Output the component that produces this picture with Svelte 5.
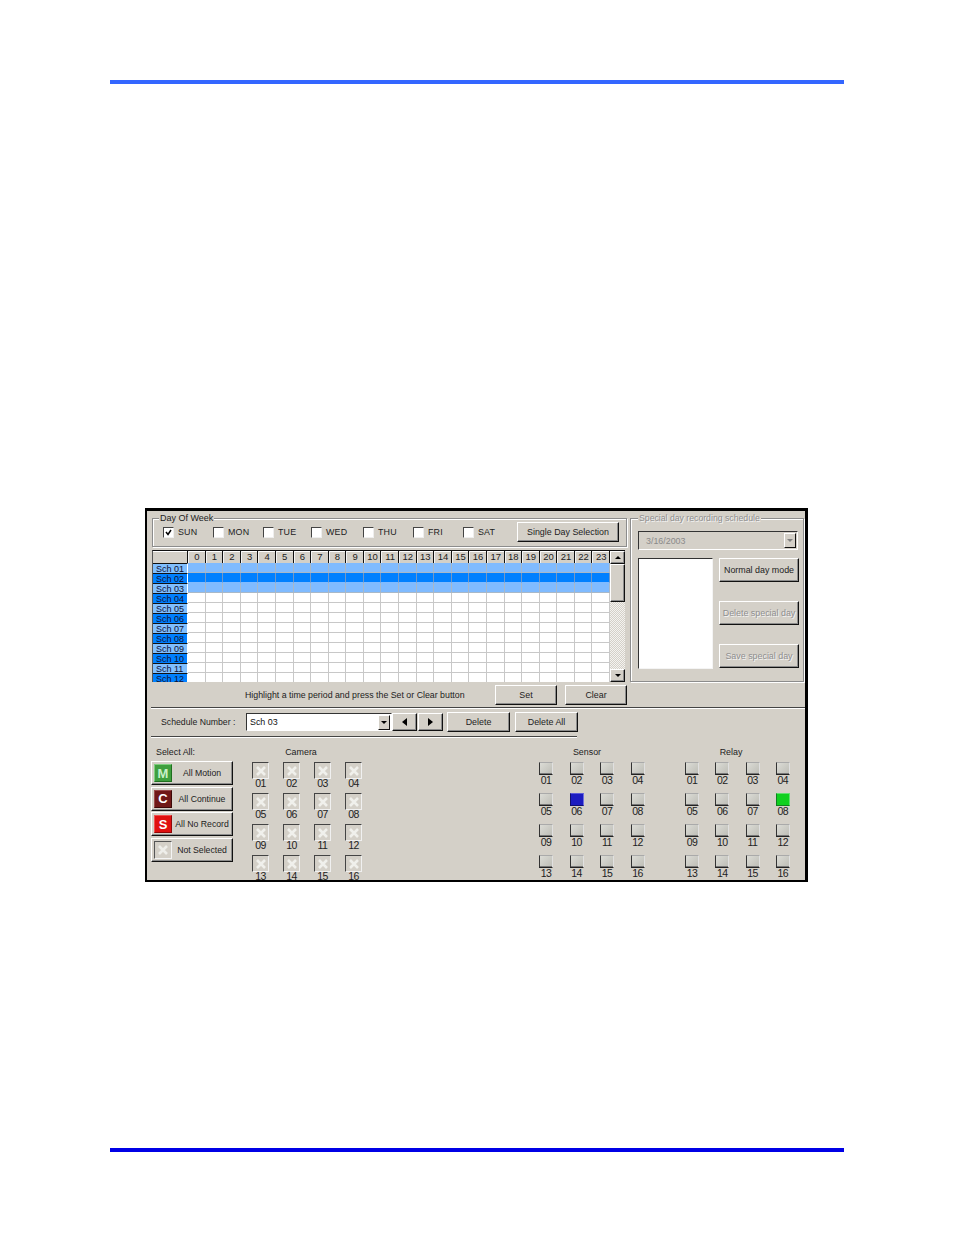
<script lang="ts">
	const days = ['SUN', 'MON', 'TUE', 'WED', 'THU', 'FRI', 'SAT'];
	const hours = Array.from({ length: 24 }, (_, i) => i);
	const pad = (n: number) => String(n).padStart(2, '0');
	const schedules = Array.from({ length: 12 }, (_, i) => 'Sch ' + pad(i + 1));
	const slots = Array.from({ length: 16 }, (_, i) => pad(i + 1));

	const modes = [
		{ key: 'M', label: 'All Motion', cls: 'motion' },
		{ key: 'C', label: 'All Continue', cls: 'continue' },
		{ key: 'S', label: 'All No Record', cls: 'norecord' },
		{ key: '', label: 'Not Selected', cls: 'none' }
	];

	// rows 1-3 are the ones selected in the grid
	function rowClass(i: number) {
		if (i === 1) return 'on-dark';
		if (i === 0 || i === 2) return 'on-light';
		return '';
	}
</script>

<div class="page">
	<div class="rule top-rule"></div>

	<div class="window">
		<div class="upper">
			<div class="left-col">
				<div class="group days">
					<span class="legend">Day Of Week</span>
					<div class="day-row">
						{#each days as day, i}
							<div class="day day-{i}">
								<span class="check">
									{#if i === 0}
										<svg viewBox="0 0 9 9" width="9" height="9"><path d="M2 4 L4 6.5 L7 2" fill="none" stroke="#000" stroke-width="1.5" /></svg>
									{/if}
								</span>
								<span>{day}</span>
							</div>
						{/each}
						<div class="btn single">Single Day Selection</div>
					</div>
				</div>

				<div class="grid-wrap">
					<div class="grid">
						<div class="head corner"></div>
						{#each hours as h}
							<div class="head">{h}</div>
						{/each}
						{#each schedules as name, i}
							<div class="row-label" class:alt={i % 2 === 1}>{name}</div>
							{#each hours as h}
								<div class="cell {rowClass(i)}"></div>
							{/each}
						{/each}
					</div>
					<div class="scrollbar">
						<div class="sb-btn"><span class="tri up"></span></div>
						<div class="sb-thumb"></div>
						<div class="sb-track"></div>
						<div class="sb-btn"><span class="tri down"></span></div>
					</div>
				</div>

				<div class="hint-row">
					<span class="hint">Highlight a time period and press the Set or Clear button</span>
					<div class="btn set">Set</div>
					<div class="btn clear">Clear</div>
				</div>
			</div>

			<div class="group special">
				<span class="legend disabled">Special day recording schedule</span>
				<div class="date-combo">
					<span>3/16/2003</span>
					<div class="combo-btn"><span class="tri down grey"></span></div>
				</div>
				<div class="special-body">
					<div class="listbox"></div>
					<div class="special-btns">
						<div class="btn">Normal day mode</div>
						<div class="btn disabled-btn">Delete special day</div>
						<div class="btn disabled-btn">Save special day</div>
					</div>
				</div>
			</div>
		</div>

		<div class="divider full"></div>

		<div class="schedule-row">
			<span class="schedule-label">Schedule Number :</span>
			<div class="sch-combo">
				<span>Sch 03</span>
				<div class="combo-btn"><span class="tri down"></span></div>
			</div>
			<div class="btn nav"><span class="tri left"></span></div>
			<div class="btn nav"><span class="tri right"></span></div>
			<div class="btn del">Delete</div>
			<div class="btn del-all">Delete All</div>
		</div>

		<div class="divider short"></div>

		<div class="lower">
			<div class="select-all">
				<div class="section-title">Select All:</div>
				{#each modes as m}
					<div class="btn mode">
						<span class="badge {m.cls}">
							{#if m.key}
								{m.key}
							{:else}
								<svg viewBox="0 0 14 14" width="14" height="14"><path d="M3 3 L11 11 M11 3 L3 11" stroke="#eeeeea" stroke-width="2.6" /></svg>
							{/if}
						</span>
						<span class="mode-text">{m.label}</span>
					</div>
				{/each}
			</div>

			<div class="bank camera">
				<div class="section-title">Camera</div>
				<div class="tiles">
					{#each slots as s}
						<div class="slot">
							<span class="cam-tile">
								<svg viewBox="0 0 14 14" width="14" height="14"><path d="M3 3 L11 11 M11 3 L3 11" stroke="#f0f0ec" stroke-width="2.6" /></svg>
							</span>
							<span class="num">{s}</span>
						</div>
					{/each}
				</div>
			</div>

			<div class="bank sensor">
				<div class="section-title">Sensor</div>
				<div class="tiles">
					{#each slots as s}
						<div class="slot">
							<span class="led" class:blue={s === '06'}></span>
							<span class="num">{s}</span>
						</div>
					{/each}
				</div>
			</div>

			<div class="bank relay">
				<div class="section-title">Relay</div>
				<div class="tiles">
					{#each slots as s}
						<div class="slot">
							<span class="led" class:green={s === '08'}></span>
							<span class="num">{s}</span>
						</div>
					{/each}
				</div>
			</div>
		</div>
	</div>

	<div class="rule bottom-rule"></div>
</div>

<style>
	:global(body) {
		margin: 0;
		background: #fff;
	}

	.page {
		width: 954px;
		height: 1235px;
		padding: 80px 110px 0;
		box-sizing: border-box;
		font-family: 'Liberation Sans', Arial, sans-serif;
		font-size: 8.9px;
		color: #111;
	}

	.rule {
		width: 734px;
		height: 4px;
	}

	.top-rule {
		background: #3366ff;
	}

	.bottom-rule {
		background: #0000e6;
		margin-top: 266px;
	}

	.window {
		width: 663px;
		height: 374px;
		margin: 424px 0 0 35px;
		box-sizing: border-box;
		border: solid #000;
		border-width: 3px 3px 2px 2px;
		background: #d4d0c8;
		overflow: hidden;
	}

	.upper {
		display: flex;
		gap: 3px;
		padding: 7px 0 0 5px;
		height: 196px;
		box-sizing: border-box;
	}

	.left-col {
		width: 475px;
	}

	.group {
		box-sizing: border-box;
		border: 1px solid #8c8c8c;
		box-shadow: 1px 1px 0 #fff, inset 1px 1px 0 #fff;
	}

	.legend {
		display: block;
		width: fit-content;
		background: #d4d0c8;
		line-height: 10px;
		padding: 0 1px;
		margin: -6px 0 0 6px;
		font-size: 9px;
		color: #222;
	}

	.legend.disabled {
		margin-left: 0;
		font-size: 8.7px;
		color: #8f8f8f;
		text-shadow: 1px 1px 0 #f4f4f4;
	}

	.days {
		height: 29px;
	}

	.day-row {
		display: flex;
		align-items: center;
		height: 22px;
		margin-top: -2px;
	}

	.day {
		display: flex;
		align-items: center;
		gap: 4px;
		width: 50px;
		letter-spacing: 0.2px;
		color: #222;
	}

	.day-0 {
		margin-left: 10px;
	}

	.day-2 {
		width: 48px;
	}

	.day-3 {
		width: 52px;
	}

	.check {
		width: 9px;
		height: 9px;
		background: #fff;
		border: 1px solid;
		border-color: #444 #eee #eee #444;
		display: flex;
		flex: none;
	}

	.btn {
		box-sizing: border-box;
		display: flex;
		align-items: center;
		justify-content: center;
		background: #d4d0c8;
		border: 1px solid;
		border-color: #fff #111 #111 #fff;
		box-shadow: inset -1px -1px 0 #8c8c8c;
		color: #222;
		white-space: nowrap;
	}

	.single {
		width: 102px;
		height: 20px;
		margin-left: 4px;
	}

	.grid-wrap {
		display: flex;
		margin-top: 3px;
		height: 132px;
		border-left: 1px solid #555;
		border-top: 1px solid #111;
		overflow: hidden;
		width: 473px;
		box-sizing: border-box;
		box-shadow: inset 0 -1px 0 #eee;
	}

	.grid {
		width: 457px;
		height: 131px;
		overflow: hidden;
		flex: none;
		display: grid;
		grid-template-columns: 35px repeat(24, 1fr);
		grid-auto-rows: 10px;
		grid-template-rows: 12px;
		background: #fff;
	}

	.head {
		box-sizing: border-box;
		background: #d4d0c8;
		border-right: 1px solid #111;
		border-left: 1px solid #f4f4f4;
		text-align: center;
		line-height: 12px;
		font-size: 9.5px;
		color: #222;
		box-shadow: inset 0 1px 0 #fff;
	}

	.corner {
		border-left: 0;
	}

	.row-label {
		box-sizing: border-box;
		background: #80bfff;
		border-top: 1px solid #111;
		border-right: 1px solid #fff;
		line-height: 10px;
		padding-left: 3px;
		font-size: 9px;
		color: #113;
		overflow: hidden;
	}

	.row-label.alt {
		background: #0080ff;
	}

	.cell {
		box-sizing: border-box;
		background: #fff;
		border-right: 1px solid #c8c8c8;
		border-bottom: 1px solid #c8c8c8;
	}

	.cell.on-light {
		background: #80bbff;
		border-color: #a8b8c8;
	}

	.cell.on-dark {
		background: #0080ff;
		border-right-color: #7098c8;
		border-bottom-color: #80bbff;
	}

	.scrollbar {
		width: 15px;
		flex: none;
		display: flex;
		flex-direction: column;
		height: 131px;
	}

	.sb-btn,
	.sb-thumb {
		box-sizing: border-box;
		background: #d4d0c8;
		border: 1px solid;
		border-color: #fff #111 #111 #fff;
		box-shadow: inset -1px -1px 0 #8c8c8c;
		display: flex;
		align-items: center;
		justify-content: center;
	}

	.sb-btn {
		height: 13px;
		flex: none;
	}

	.sb-thumb {
		height: 38px;
		flex: none;
	}

	.sb-track {
		flex: 1;
		background-color: #e8e6e2;
		background-image: repeating-conic-gradient(#d4d0c8 0 25%, #f4f3f0 0 50%);
		background-size: 2px 2px;
	}

	.tri {
		width: 0;
		height: 0;
		display: block;
		border-style: solid;
		border-color: transparent;
	}

	.tri.up {
		border-width: 0 3.5px 3.5px;
		border-bottom-color: #000;
	}

	.tri.down {
		border-width: 3.5px 3.5px 0;
		border-top-color: #000;
	}

	.tri.down.grey {
		border-top-color: #808080;
	}

	.tri.left {
		border-width: 4.5px 5px 4.5px 0;
		border-right-color: #000;
	}

	.tri.right {
		border-width: 4.5px 0 4.5px 5px;
		border-left-color: #000;
	}

	.hint-row {
		display: flex;
		align-items: center;
		height: 20px;
		margin-top: 3px;
	}

	.hint {
		margin-left: 93px;
		width: 250px;
		flex: none;
		white-space: nowrap;
		font-size: 8.8px;
		color: #222;
	}

	.set,
	.clear {
		width: 62px;
		height: 20px;
	}

	.clear {
		margin-left: 8px;
	}

	.special {
		width: 174px;
		height: 164px;
		padding: 0 4px 0 7px;
	}

	.date-combo,
	.sch-combo {
		box-sizing: border-box;
		display: flex;
		align-items: center;
		justify-content: space-between;
		border: 1px solid;
		border-color: #333 #fff #fff #333;
	}

	.date-combo {
		height: 19px;
		width: 160px;
		padding-left: 7px;
		color: #8a8a8a;
		margin-top: 8px;
	}

	.combo-btn {
		box-sizing: border-box;
		width: 12px;
		height: 15px;
		background: #d4d0c8;
		border: 1px solid;
		border-color: #fff #111 #111 #fff;
		display: flex;
		align-items: center;
		justify-content: center;
		margin-right: 1px;
	}

	.special-body {
		display: flex;
		gap: 6px;
		margin-top: 8px;
	}

	.listbox {
		box-sizing: border-box;
		width: 75px;
		height: 111px;
		background: #fff;
		border: 1px solid;
		border-color: #333 #f4f4f4 #f4f4f4 #333;
	}

	.special-btns {
		width: 80px;
		height: 110px;
		display: flex;
		flex-direction: column;
		justify-content: space-between;
	}

	.special-btns .btn {
		height: 24px;
	}

	.disabled-btn {
		color: #8f8f8f;
		text-shadow: 1px 1px 0 #f4f4f4;
	}

	.divider {
		height: 1px;
		background: #444;
		box-shadow: 0 1px 0 #fff;
		margin-left: 4px;
	}

	.divider.short {
		width: 426px;
	}

	.schedule-row {
		display: flex;
		align-items: center;
		height: 28px;
		padding-left: 14px;
	}

	.schedule-label {
		width: 85px;
		flex: none;
		font-size: 8.7px;
		color: #222;
	}

	.sch-combo {
		width: 146px;
		height: 18px;
		background: #fff;
		padding-left: 3px;
	}

	.nav {
		width: 25px;
		height: 18px;
		margin-left: 1px;
	}

	.sch-combo + .nav {
		margin-left: 0;
	}

	.del,
	.del-all {
		width: 63px;
		height: 20px;
	}

	.del {
		margin-left: 4px;
	}

	.del-all {
		margin-left: 5px;
	}

	.lower {
		display: flex;
		padding: 10px 0 0 4px;
		height: 143px;
		box-sizing: border-box;
		overflow: hidden;
	}

	.section-title {
		height: 14px;
		line-height: 11px;
		color: #222;
	}

	.select-all {
		width: 101px;
		flex: none;
	}

	.select-all .section-title {
		padding-left: 5px;
	}

	.mode {
		width: 82px;
		height: 24px;
		margin-bottom: 1.5px;
		justify-content: flex-start;
		padding-left: 2px;
	}

	.badge {
		box-sizing: border-box;
		width: 18px;
		height: 18px;
		flex: none;
		display: flex;
		align-items: center;
		justify-content: center;
		font-size: 13px;
		font-weight: 700;
		color: #fff;
		border: 1px solid;
	}

	.badge.motion {
		background: #3f9f3f;
		border-color: #7fcf7f #1f6f1f #1f6f1f #7fcf7f;
		color: #c8f0c8;
	}

	.badge.continue {
		background: #701818;
		border-color: #9a4a4a #3c0808 #3c0808 #9a4a4a;
	}

	.badge.norecord {
		background: #e01010;
		border-color: #f05050 #900808 #900808 #f05050;
	}

	.badge.none {
		background: #d4d0c8;
		border-color: #555 #f4f4f4 #f4f4f4 #555;
	}

	.mode-text {
		flex: 1;
		text-align: center;
		color: #222;
		white-space: nowrap;
		font-size: 8.7px;
	}

	.bank .section-title {
		text-align: center;
	}

	.tiles {
		display: grid;
		grid-template-columns: repeat(4, 1fr);
		margin-top: 1px;
	}

	.camera {
		width: 124px;
		flex: none;
		margin-right: 163px;
	}

	.camera .section-title {
		width: 98px;
	}

	.slot {
		height: 31px;
		display: flex;
		flex-direction: column;
		align-items: flex-start;
		color: #222;
	}

	.num {
		line-height: 9px;
		font-size: 10.5px;
		letter-spacing: -0.5px;
	}

	.camera .num {
		width: 17px;
		text-align: center;
	}

	.cam-tile {
		box-sizing: border-box;
		width: 17px;
		height: 17px;
		flex: none;
		display: flex;
		align-items: center;
		justify-content: center;
		background: #d4d0c8;
		border: 1px solid;
		border-color: #444 #f0f0f0 #f0f0f0 #444;
	}

	.sensor {
		width: 122px;
		flex: none;
		margin-right: 24px;
	}

	.relay {
		width: 121px;
		flex: none;
	}

	.sensor .section-title {
		width: 96px;
	}

	.relay .section-title {
		width: 92px;
	}

	.led {
		box-sizing: border-box;
		width: 14px;
		height: 13px;
		flex: none;
		margin-bottom: 1px;
		background: linear-gradient(135deg, #dcdcd6, #bdbdb6);
		border: 1px solid;
		border-color: #aaa #e0e0e0 #222 #333;
		box-shadow: inset 0 -1px 0 #777;
	}

	.led.blue {
		background: #1c1cc0;
		border-color: #5a5ad8 #7070e0 #101070 #101070;
		box-shadow: none;
	}

	.led.green {
		background: #10d020;
		border-color: #60e070 #60e070 #108020 #108020;
		box-shadow: none;
	}

	.sensor .num,
	.relay .num {
		width: 14px;
		text-align: center;
	}
</style>
